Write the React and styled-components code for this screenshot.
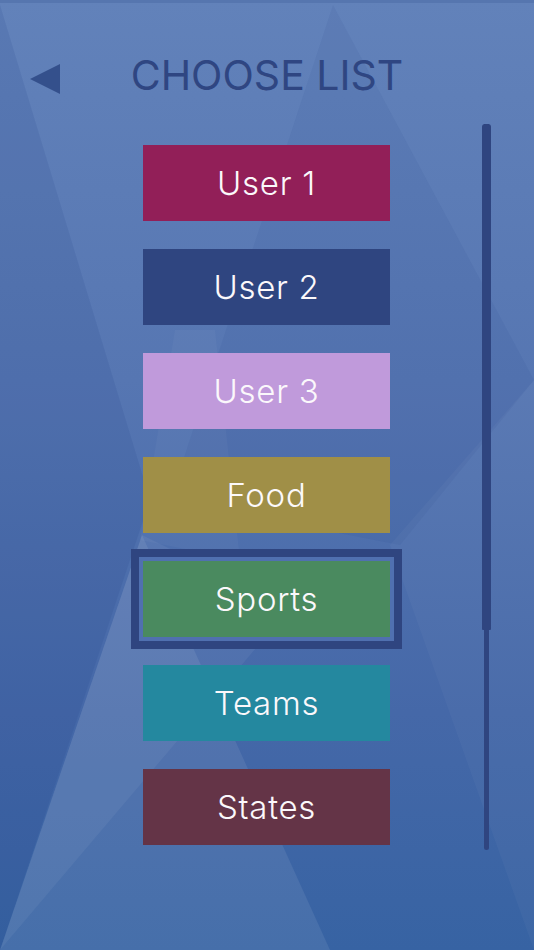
import React from "react";
import styled, { createGlobalStyle } from "styled-components";

const Global = createGlobalStyle`
  html, body { margin: 0; padding: 0; background: #3a63a4; }
  * { box-sizing: border-box; }
`;

const Screen = styled.div`
  position: relative;
  width: 534px;
  height: 950px;
  overflow: hidden;
  background: linear-gradient(180deg, #6282ba 0%, #5676b2 40%, #4568a8 75%, #3763a3 100%);
  font-family: Inter, "Open Sans", "DejaVu Sans", sans-serif;
`;

const Backdrop = styled.svg`
  position: absolute;
  inset: 0;
  width: 534px;
  height: 950px;
  z-index: 0;
  pointer-events: none;
`;

const Content = styled.div`
  position: relative;
  z-index: 1;
  display: flex;
  flex-direction: column;
`;

const Header = styled.header`
  display: grid;
  grid-template-columns: 30px 1fr 30px;
  align-items: center;
  padding: 55px 30px 0;
  height: 124px;
  align-content: start;
`;

const BackButton = styled.button`
  display: flex;
  align-items: center;
  justify-content: center;
  width: 30px;
  height: 30px;
  margin-top: 6px;
  padding: 0;
  border: none;
  background: none;
  cursor: pointer;
`;

const Title = styled.h1`
  margin: 0;
  text-align: center;
  font-size: 41px;
  line-height: 41px;
  font-weight: 400;
  color: #2f4682;
`;

const Body = styled.div`
  display: flex;
  align-items: flex-start;
  padding-left: 143px;
`;

const List = styled.div`
  display: flex;
  flex-direction: column;
  gap: 28px;
  width: 247px;
  padding-top: 21px;
`;

const Item = styled.button`
  display: flex;
  align-items: center;
  justify-content: center;
  width: 247px;
  height: 76px;
  padding: 0;
  border: none;
  background: ${(p) => p.$bg};
  color: #fbf8fb;
  font-family: Inter, "Open Sans", "DejaVu Sans", sans-serif;
  font-size: 33px;
  font-weight: 300;
  letter-spacing: 0.7px;
  box-shadow: ${(p) =>
    p.$selected ? "0 0 0 4px #5070b0, 0 0 0 12px #2f4580" : "none"};
  cursor: pointer;
`;

const Scroll = styled.div`
  position: relative;
  margin-left: 92px;
  width: 9px;
  height: 726px;
  display: flex;
  justify-content: center;
`;

const Track = styled.div`
  width: 5px;
  height: 100%;
  background: #2f4580;
  border-radius: 0 0 3px 3px;
`;

const Thumb = styled.div`
  position: absolute;
  top: 0;
  left: 0;
  width: 9px;
  height: 506px;
  background: #2f4580;
  border-radius: 3px 3px 1px 1px;
`;

const items = [
  { label: "User 1", bg: "#921f58" },
  { label: "User 2", bg: "#2f4580" },
  { label: "User 3", bg: "#c09adb" },
  { label: "Food", bg: "#a08f47" },
  { label: "Sports", bg: "#4a8a5f", selected: true },
  { label: "Teams", bg: "#24889f" },
  { label: "States", bg: "#643447" },
];

export default function App() {
  return (
    <>
      <Global />
      <Screen>
        <Backdrop viewBox="0 0 534 950">
          <rect x="0" y="0" width="534" height="3" fill="#4f6ea8" opacity="0.6" />
          <polygon points="0,5 150,500 0,950" fill="#1c3d80" opacity="0.13" />
          <polygon points="333,5 534,380 400,545 170,500" fill="#1c3d80" opacity="0.07" />
          <polygon points="534,380 534,950 390,545" fill="#ffffff" opacity="0.03" />
          <polygon points="0,950 142,535 330,950" fill="#ffffff" opacity="0.08" />
          <polygon points="0,950 142,535 290,608" fill="#ffffff" opacity="0.05" />
          <polygon points="175,330 215,330 240,560 140,540" fill="#ffffff" opacity="0.03" />
        </Backdrop>
        <Content>
          <Header>
            <BackButton aria-label="Back">
              <svg width="30" height="30" viewBox="0 0 30 30">
                <polygon points="0,15 30,0 30,30" fill="#34508c" />
              </svg>
            </BackButton>
            <Title>CHOOSE LIST</Title>
            <span />
          </Header>
          <Body>
            <List>
              {items.map((it) => (
                <Item key={it.label} $bg={it.bg} $selected={it.selected}>
                  {it.label}
                </Item>
              ))}
            </List>
            <Scroll>
              <Track />
              <Thumb />
            </Scroll>
          </Body>
        </Content>
      </Screen>
    </>
  );
}
